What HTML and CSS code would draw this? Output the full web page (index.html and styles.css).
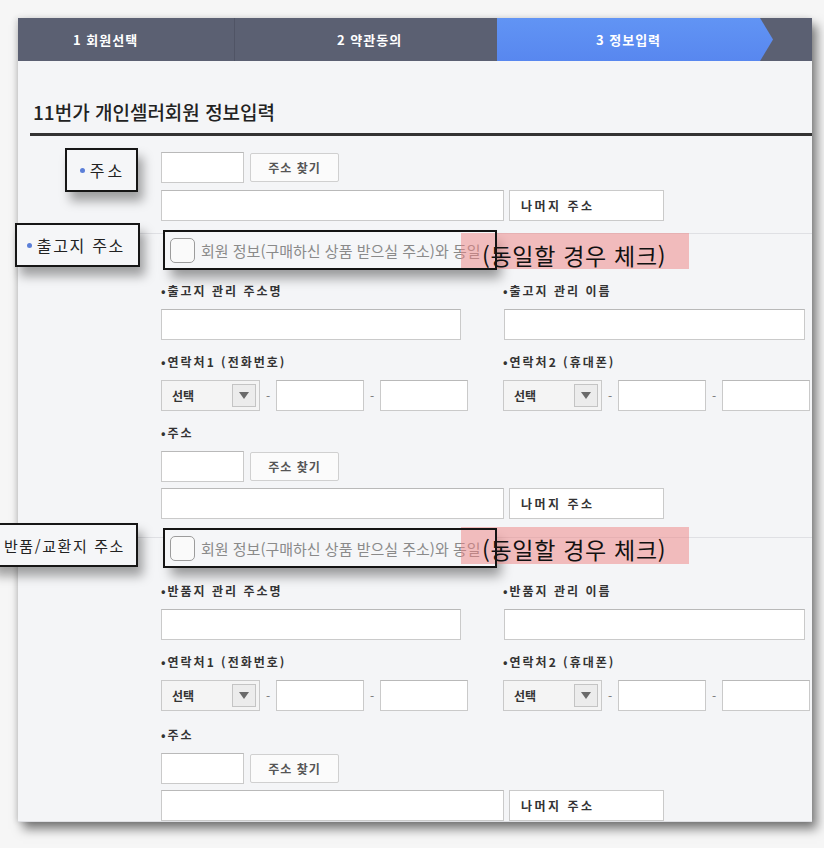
FILE: index.html
```html
<!DOCTYPE html>
<html lang="ko">
<head>
    <meta charset="UTF-8">
    <meta name="viewport" content="width=device-width, initial-scale=1.0">
    <title>11번가 개인셀러회원 정보입력</title>
    <link rel="stylesheet" href="styles.css">
</head>
<body>
    <div class="card">
        <div class="steps">
            <div class="step step-first">1 회원선택</div>
            <div class="step step-second">2 약관동의</div>
            <div class="step step-active">3 정보입력</div>
        </div>

        <h1 class="title">11번가 개인셀러회원 정보입력</h1>

        <!-- 주소 -->
        <div class="form-row row-main">
            <div class="row-label">
                <div class="label-box label-main"><span class="dot"></span>주소</div>
            </div>
            <div class="row-body">
                <div class="addr-line">
                    <input type="text" class="input zip">
                    <button class="btn-find">주소 찾기</button>
                </div>
                <div class="addr-line addr-line-2">
                    <input type="text" class="input addr">
                    <div class="addr-rest">나머지 주소</div>
                </div>
            </div>
        </div>

        <!-- 출고지 주소 -->
        <div class="form-row row-ship">
            <div class="row-label">
                <div class="label-box label-ship"><span class="dot"></span>출고지 주소</div>
            </div>
            <div class="row-body">
                <div class="check-row">
                    <span class="check"></span>
                    <span class="check-text">회원 정보(구매하신 상품 받으실 주소)와 동일</span>
                    <span class="check-note">(동일할 경우 체크)</span>
                </div>
                <div class="fields">
                    <div class="field">
                        <div class="field-label">•출고지 관리 주소명</div>
                        <input type="text" class="input wide">
                    </div>
                    <div class="field">
                        <div class="field-label">•출고지 관리 이름</div>
                        <input type="text" class="input wide wide-2">
                    </div>
                    <div class="field">
                        <div class="field-label">•연락처1 (전화번호)</div>
                        <div class="phone">
                            <div class="select">선택<span class="select-arrow"><svg width="10" height="7" viewBox="0 0 10 7"><polygon points="0,0 10,0 5,7" fill="#6a6a6a"/></svg></span></div>
                            <span class="dash">-</span>
                            <input type="text" class="input phone-num">
                            <span class="dash">-</span>
                            <input type="text" class="input phone-num">
                        </div>
                    </div>
                    <div class="field">
                        <div class="field-label">•연락처2 (휴대폰)</div>
                        <div class="phone">
                            <div class="select">선택<span class="select-arrow"><svg width="10" height="7" viewBox="0 0 10 7"><polygon points="0,0 10,0 5,7" fill="#6a6a6a"/></svg></span></div>
                            <span class="dash">-</span>
                            <input type="text" class="input phone-num">
                            <span class="dash">-</span>
                            <input type="text" class="input phone-num">
                        </div>
                    </div>
                    <div class="field field-full">
                        <div class="field-label">•주소</div>
                        <div class="addr-line">
                            <input type="text" class="input zip">
                            <button class="btn-find">주소 찾기</button>
                        </div>
                        <div class="addr-line addr-line-2">
                            <input type="text" class="input addr">
                            <div class="addr-rest">나머지 주소</div>
                        </div>
                    </div>
                </div>
            </div>
        </div>

        <!-- 반품/교환지 주소 -->
        <div class="form-row row-return">
            <div class="row-label">
                <div class="label-box label-return">반품/교환지 주소</div>
            </div>
            <div class="row-body">
                <div class="check-row">
                    <span class="check"></span>
                    <span class="check-text">회원 정보(구매하신 상품 받으실 주소)와 동일</span>
                    <span class="check-note">(동일할 경우 체크)</span>
                </div>
                <div class="fields">
                    <div class="field">
                        <div class="field-label">•반품지 관리 주소명</div>
                        <input type="text" class="input wide">
                    </div>
                    <div class="field">
                        <div class="field-label">•반품지 관리 이름</div>
                        <input type="text" class="input wide wide-2">
                    </div>
                    <div class="field">
                        <div class="field-label">•연락처1 (전화번호)</div>
                        <div class="phone">
                            <div class="select">선택<span class="select-arrow"><svg width="10" height="7" viewBox="0 0 10 7"><polygon points="0,0 10,0 5,7" fill="#6a6a6a"/></svg></span></div>
                            <span class="dash">-</span>
                            <input type="text" class="input phone-num">
                            <span class="dash">-</span>
                            <input type="text" class="input phone-num">
                        </div>
                    </div>
                    <div class="field">
                        <div class="field-label">•연락처2 (휴대폰)</div>
                        <div class="phone">
                            <div class="select">선택<span class="select-arrow"><svg width="10" height="7" viewBox="0 0 10 7"><polygon points="0,0 10,0 5,7" fill="#6a6a6a"/></svg></span></div>
                            <span class="dash">-</span>
                            <input type="text" class="input phone-num">
                            <span class="dash">-</span>
                            <input type="text" class="input phone-num">
                        </div>
                    </div>
                    <div class="field field-full">
                        <div class="field-label">•주소</div>
                        <div class="addr-line">
                            <input type="text" class="input zip">
                            <button class="btn-find">주소 찾기</button>
                        </div>
                        <div class="addr-line addr-line-2">
                            <input type="text" class="input addr">
                            <div class="addr-rest">나머지 주소</div>
                        </div>
                    </div>
                </div>
            </div>
        </div>
    </div>
</body>
</html>
```

FILE: styles.css
```css
* {
    margin: 0;
    padding: 0;
    box-sizing: border-box;
}

body {
    font-family: "Noto Sans CJK KR", "Noto Sans", sans-serif;
    background-color: #f6f6f6;
    height: 848px;
    overflow: hidden;
}

.card {
    margin: 18px 0 0 18px;
    width: 794px;
    height: 804px;
    background-color: #f4f5f7;
    overflow-x: visible;
    overflow-y: clip;
    box-shadow: 5px 7px 10px rgba(0,0,0,0.5), -2px 0 6px rgba(0,0,0,0.12);
}

/* step bar */
.steps {
    display: flex;
    height: 43px;
    background-color: #5b6072;
    color: #fff;
    font-size: 13px;
    font-weight: 700;
    letter-spacing: 1px;
}

.step {
    display: flex;
    align-items: center;
}

.step-first {
    width: 217px;
    padding-left: 55px;
    border-right: 1px solid #505465;
}

.step-second {
    width: 262px;
    padding-left: 102px;
}

.step-active {
    width: 276px;
    justify-content: center;
    padding-right: 13px;
    background: linear-gradient(#6194f4, #5887ef);
    clip-path: polygon(0 0, 263px 0, 276px 50%, 263px 100%, 0 100%);
}

.title {
    margin-left: 12px;
    padding: 39px 0 9px 3px;
    font-size: 19px;
    line-height: 24px;
    font-weight: 500;
    color: #222;
    border-bottom: 3px solid #333;
}

/* form rows */
.form-row {
    display: grid;
    grid-template-columns: 143px 1fr;
    border-bottom: 1px solid #dfe0e4;
}

.row-main {
    padding: 16px 0 12px;
}

.row-ship {
    padding-bottom: 18px;
}

.row-label {
    display: flex;
    justify-content: flex-end;
    align-items: flex-start;
    padding-right: 23px;
}

.label-box {
    display: flex;
    align-items: center;
    height: 44px;
    padding: 0 13px;
    border: 2px solid #161616;
    background-color: #f5f6f8;
    font-size: 16px;
    letter-spacing: 2px;
    color: #222;
    white-space: nowrap;
    box-shadow: 5px 9px 10px rgba(0,0,0,0.35);
}

.label-box .dot {
    flex: none;
    width: 5px;
    height: 5px;
    border-radius: 50%;
    background-color: #5b7fd8;
    margin-right: 5px;
}

.label-main {
    width: 73px;
    padding: 0 0 0 2px;
    justify-content: center;
    margin-top: -4px;
    letter-spacing: 3px;
}

.label-ship {
    margin-top: -11px;
    margin-right: -2px;
    padding-left: 10px;
    letter-spacing: 1.7px;
}

.label-return {
    margin-top: -15px;
    padding-right: 11px;
    font-size: 15px;
    letter-spacing: 1.6px;
}

/* inputs */
.input {
    display: block;
    height: 31px;
    background-color: #fff;
    border: 1px solid #cacaca;
    border-top-color: #b9b9b9;
    outline: none;
}

.addr-line {
    display: flex;
    align-items: center;
    gap: 6px;
}

.addr-line-2 {
    gap: 5px;
    margin-top: 6px;
}

.row-main .addr-line-2 {
    margin-top: 7px;
}

.zip {
    width: 83px;
}

.addr {
    width: 343px;
}

.btn-find {
    width: 89px;
    height: 29px;
    border: 1px solid #d0d0d0;
    border-radius: 2px;
    background-color: #fbfbfb;
    font-family: inherit;
    font-size: 12px;
    font-weight: 700;
    letter-spacing: 1px;
    color: #555;
}

.addr-rest {
    display: flex;
    align-items: center;
    width: 155px;
    height: 31px;
    padding-left: 11px;
    background-color: #fff;
    border: 1px solid #cacaca;
    font-size: 12px;
    font-weight: 700;
    letter-spacing: 2.5px;
    color: #333;
}

/* same-as-member check */
.check-row {
    position: relative;
    display: flex;
    align-items: center;
    gap: 6px;
    width: 330px;
    height: 36px;
    margin: -2px 0 15px 4px;
    padding-left: 5px;
    background-color: #f5f6f8;
    box-shadow: 6px 10px 12px rgba(0,0,0,0.38);
}

.check-row::after {
    content: "";
    position: absolute;
    top: -2px;
    left: -2px;
    right: -2px;
    bottom: -2px;
    border: 2px solid #141414;
}

.row-return .check-row {
    margin-top: -8px;
    margin-bottom: 17px;
}

.check {
    flex: none;
    width: 25px;
    height: 25px;
    border: 1px solid #9c9c9c;
    border-radius: 5px;
    background-color: #fafafa;
}

.check-text {
    font-size: 15px;
    color: #8a8a8a;
    white-space: nowrap;
}

.check-note {
    position: absolute;
    left: 296px;
    top: 1px;
    width: 228px;
    height: 36px;
    padding: 8px 0 0 21px;
    background-color: rgba(238, 130, 130, 0.5);
    font-size: 23px;
    line-height: 28px;
    letter-spacing: 0.7px;
    color: #111;
    white-space: nowrap;
}

.row-return .check-note {
    top: -3px;
    height: 37px;
}

/* sub fields */
.fields {
    display: grid;
    grid-template-columns: 342px 1fr;
    row-gap: 14px;
}

.field-full {
    grid-column: 1 / -1;
}

.row-return .field-full {
    margin-top: 2px;
}

.field-label {
    font-size: 12px;
    font-weight: 700;
    line-height: 16px;
    letter-spacing: 2px;
    color: #333;
    margin-bottom: 10px;
}

.wide {
    width: 300px;
}

.wide-2 {
    width: 301px;
    margin-left: 1px;
}

.phone {
    display: flex;
    align-items: center;
    gap: 5px;
}

.select {
    display: flex;
    align-items: center;
    justify-content: space-between;
    width: 99px;
    height: 31px;
    padding: 0 3px 0 10px;
    background-color: #f4f4f4;
    border: 1px solid #c9c9c9;
    font-size: 12px;
    font-weight: 700;
    color: #333;
}

.select-arrow {
    display: flex;
    align-items: center;
    justify-content: center;
    width: 24px;
    height: 23px;
    background-color: #ececec;
    border: 1px solid #c4c4c4;
}

.dash {
    width: 6px;
    text-align: center;
    font-size: 12px;
    color: #777;
}

.phone-num {
    width: 88px;
}
```
